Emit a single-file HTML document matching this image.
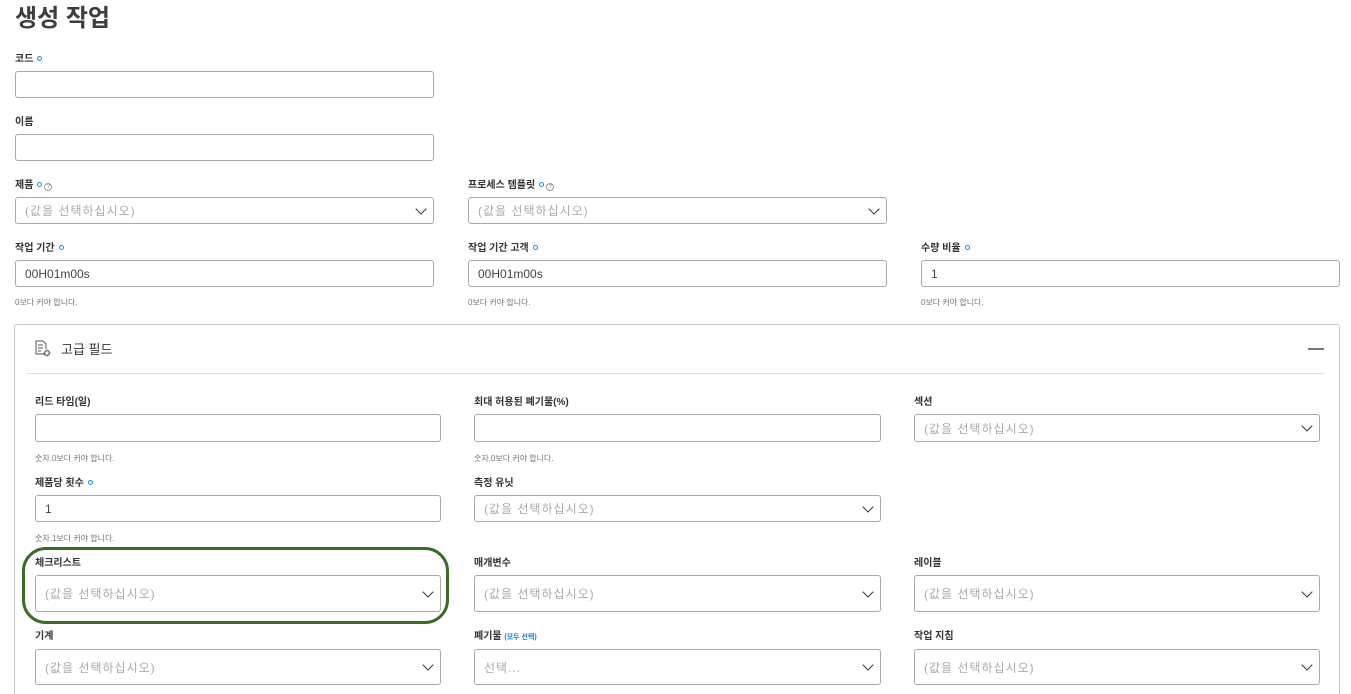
<!DOCTYPE html>
<html style="width:1351px;height:694px;overflow:hidden"><head><meta charset="utf-8"><style>
*{box-sizing:border-box;margin:0;padding:0}
body{width:1351px;height:694px;overflow:hidden;background:#fff;font-family:"Liberation Sans","Noto Sans CJK KR",sans-serif;color:#333;position:relative}
.a{position:absolute}
.t{left:15px;top:-2px;font-size:24px;font-weight:bold;color:#3d3d3d}
.l{font-size:10px;font-weight:bold;color:#333;line-height:12px;white-space:nowrap;margin-top:2px}
.r{display:inline-block;width:5px;height:5px;border:1.2px solid #1a8fd6;border-radius:50%;margin-left:4px;vertical-align:1px}
.q{display:inline-block;width:8px;height:8px;border:1px solid #999;border-radius:50%;font-size:6px;line-height:6px;text-align:center;color:#999;margin-left:2px;vertical-align:0}
.i{border:1px solid #a9a9a9;border-radius:3px;background:#fff;font-size:12px;color:#444;padding-left:9px;display:flex;align-items:center}
.s{color:#aaa;letter-spacing:1px}
.h{font-size:8px;color:#777;white-space:nowrap}
.c{position:absolute;right:8px;top:50%;width:8px;height:8px;border-right:1.3px solid #333;border-bottom:1.3px solid #333;transform:translateY(-75%) rotate(45deg)}
</style></head><body>
<div class="a t">생성 작업</div>

<div class="a l" style="left:15px;top:52px">코드<span class="r"></span></div>
<div class="a i" style="left:15px;top:71px;width:419px;height:27px"></div>
<div class="a l" style="left:15px;top:115px">이름</div>
<div class="a i" style="left:15px;top:134px;width:419px;height:27px"></div>

<div class="a l" style="left:15px;top:178px">제품<span class="r"></span><span class="q">?</span></div>
<div class="a i" style="left:15px;top:197px;width:419px;height:27px"><span class="s">(값을 선택하십시오)</span><i class="c"></i></div>
<div class="a l" style="left:468px;top:178px">프로세스 템플릿<span class="r"></span><span class="q">?</span></div>
<div class="a i" style="left:468px;top:197px;width:419px;height:27px"><span class="s">(값을 선택하십시오)</span><i class="c"></i></div>

<div class="a l" style="left:15px;top:241px">작업 기간<span class="r"></span></div>
<div class="a i" style="left:15px;top:260px;width:419px;height:27px">00H01m00s</div>
<div class="a h" style="left:15px;top:297px">0보다 커야 합니다.</div>
<div class="a l" style="left:468px;top:241px">작업 기간 고객<span class="r"></span></div>
<div class="a i" style="left:468px;top:260px;width:419px;height:27px">00H01m00s</div>
<div class="a h" style="left:468px;top:297px">0보다 커야 합니다.</div>
<div class="a l" style="left:921px;top:241px">수량 비율<span class="r"></span></div>
<div class="a i" style="left:921px;top:260px;width:419px;height:27px">1</div>
<div class="a h" style="left:921px;top:297px">0보다 커야 합니다.</div>

<div class="a" style="left:14px;top:324px;width:1326px;height:370px;border:1px solid #c8c8c8;border-bottom:none;border-radius:3px 3px 0 0"></div>
<svg class="a" style="left:34px;top:340px" width="18" height="18" viewBox="0 0 18 18" fill="none" stroke="#555" stroke-width="1"><path d="M11 14H2V1h7l3 3v5"/><path d="M4 5h5M4 8h5M4 11h3"/><circle cx="13" cy="13" r="2.2"/><path d="M13 9.5v1.3M13 15.2v1.3M9.5 13h1.3M15.2 13h1.3M10.6 10.6l.9.9M14.5 14.5l.9.9M10.6 15.4l.9-.9M14.5 11.5l.9-.9"/></svg>
<div class="a" style="left:61px;top:339px;font-size:13px;color:#333">고급 필드</div>
<div class="a" style="left:1308px;top:348px;width:16px;height:1.5px;background:#777"></div>
<div class="a" style="left:27px;top:373px;width:1297px;height:1px;background:#ddd"></div>

<div class="a l" style="left:35px;top:395px">리드 타임(일)</div>
<div class="a i" style="left:35px;top:414px;width:406px;height:28px"></div>
<div class="a h" style="left:35px;top:453px">숫자.0보다 커야 합니다.</div>
<div class="a l" style="left:474px;top:395px">최대 허용된 폐기물(%)</div>
<div class="a i" style="left:474px;top:414px;width:407px;height:28px"></div>
<div class="a h" style="left:474px;top:453px">숫자.0보다 커야 합니다.</div>
<div class="a l" style="left:914px;top:395px">섹션</div>
<div class="a i" style="left:914px;top:414px;width:406px;height:28px"><span class="s">(값을 선택하십시오)</span><i class="c"></i></div>

<div class="a l" style="left:35px;top:476px">제품당 횟수<span class="r"></span></div>
<div class="a i" style="left:35px;top:495px;width:406px;height:27px">1</div>
<div class="a h" style="left:35px;top:533px">숫자.1보다 커야 합니다.</div>
<div class="a l" style="left:474px;top:476px">측정 유닛</div>
<div class="a i" style="left:474px;top:495px;width:407px;height:27px"><span class="s">(값을 선택하십시오)</span><i class="c"></i></div>

<div class="a l" style="left:35px;top:556px">체크리스트</div>
<div class="a i" style="left:35px;top:575px;width:406px;height:37px"><span class="s">(값을 선택하십시오)</span><i class="c"></i></div>
<div class="a l" style="left:474px;top:556px">매개변수</div>
<div class="a i" style="left:474px;top:575px;width:407px;height:37px"><span class="s">(값을 선택하십시오)</span><i class="c"></i></div>
<div class="a l" style="left:914px;top:556px">레이블</div>
<div class="a i" style="left:914px;top:575px;width:406px;height:37px"><span class="s">(값을 선택하십시오)</span><i class="c"></i></div>

<div class="a l" style="left:35px;top:629px">기계</div>
<div class="a i" style="left:35px;top:649px;width:406px;height:36px"><span class="s">(값을 선택하십시오)</span><i class="c"></i></div>
<div class="a l" style="left:474px;top:629px">폐기물 <span style="font-size:7px;color:#1a7fc6">(모두 선택)</span></div>
<div class="a i" style="left:474px;top:649px;width:407px;height:36px"><span class="s">선택...</span><i class="c"></i></div>
<div class="a l" style="left:914px;top:629px">작업 지침</div>
<div class="a i" style="left:914px;top:649px;width:406px;height:36px"><span class="s">(값을 선택하십시오)</span><i class="c"></i></div>

<div class="a" style="left:22px;top:547px;width:427px;height:77px;border:3px solid #3c6a28;border-radius:24px"></div>
</body></html>
